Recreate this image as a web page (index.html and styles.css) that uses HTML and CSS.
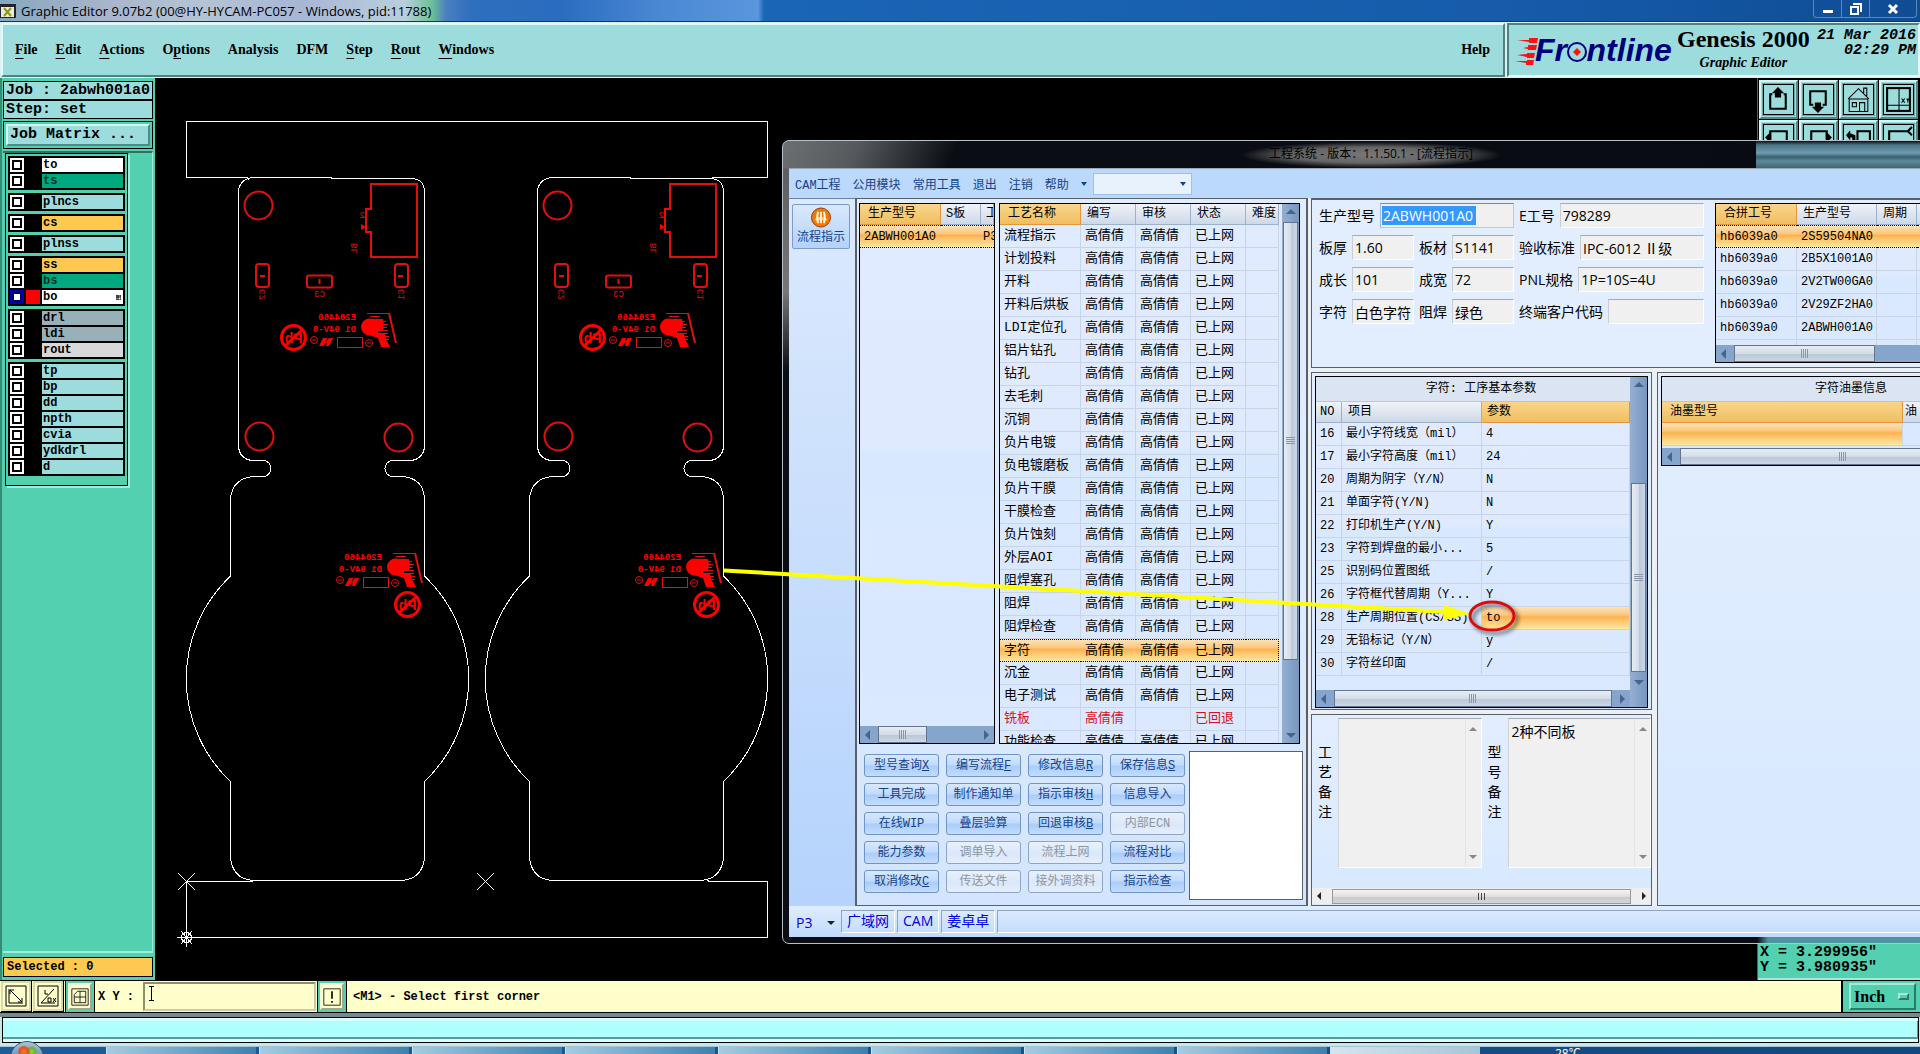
FILE: index.html
```html
<!DOCTYPE html>
<html lang="zh-CN">
<head>
    <meta charset="UTF-8">
    <meta name="viewport" content="width=device-width, initial-scale=1.0">
    <title>Graphic Editor 9.07b2</title>
    <link rel="stylesheet" href="styles.css">
</head>
<body>
    <div class="titlebar">
        <svg class="app-icon" width="16" height="14" viewBox="0 0 16 14"><rect width="16" height="14" fill="#223"/><rect x="1" y="3" width="13" height="10" fill="#e8ecd8"/><path d="M4 4l7 8M11 4l-7 8" stroke="#8c9a10" stroke-width="2"/></svg>
        <span class="title-text">Graphic Editor 9.07b2 (00@HY-HYCAM-PC057 - Windows, pid:11788)</span>
        <div class="win-controls">
            <button type="button" aria-label="Minimize"><svg width="12" height="12" viewBox="0 0 12 12"><rect x="1" y="7" width="10" height="3" fill="#fff"/></svg></button>
            <button type="button" aria-label="Restore"><svg width="12" height="12" viewBox="0 0 12 12"><path d="M3 1h8v8M1 4h7v7h-7z" fill="none" stroke="#fff" stroke-width="2"/></svg></button>
            <button type="button" class="wide" aria-label="Close"><svg width="12" height="12" viewBox="0 0 12 12"><path d="M2 2l8 8M10 2l-8 8" stroke="#fff" stroke-width="3"/></svg></button>
        </div>
    </div>

    <header class="header">
        <nav class="menubar">
            <a href="#"><u>F</u>ile</a>
            <a href="#"><u>E</u>dit</a>
            <a href="#"><u>A</u>ctions</a>
            <a href="#">O<u>p</u>tions</a>
            <a href="#">Analysis</a>
            <a href="#">DFM</a>
            <a href="#"><u>S</u>tep</a>
            <a href="#"><u>R</u>out</a>
            <a href="#"><u>W</u>indows</a>
            <a href="#" class="help">Help</a>
        </nav>
        <div class="brand">
            <svg class="logo" width="162" height="40" viewBox="0 0 162 40">
                <path d="M2 5l12 0 0-2 9 0-1 5-8 0 0-1zM8 13l5-1 0-2 9 0-1 5-8 0 0-1zM2 20l10-1 0-1 8 0-1 5-7 0 0-1zM0 26l12 0 0-1 7 0-1 5-7 0 0-2z" fill="#f11"/>
                <text x="20" y="26">Fr<tspan fill="none">o</tspan>ntline</text>
                <circle cx="62" cy="17" r="9" fill="#9cdcdc" stroke="#00007c" stroke-width="2"/>
                <path d="M62 13l4 4-4 4-4-4z" fill="#f11"/>
            </svg>
            <div class="product">
                <strong>Genesis 2000</strong>
                <em>Graphic Editor</em>
            </div>
            <div class="clock">21 Mar 2016<br>02:29 PM</div>
        </div>
    </header>

    <main class="main">
        <aside class="sidebar">
            <div class="job-info">
                <div>Job : 2abwh001a0</div>
                <div>Step: set</div>
            </div>
            <div class="matrix-box"><button type="button">Job Matrix ...</button></div>
            <div class="layer-area">
                <div class="layers">
                    <div class="group">
                        <label><input type="checkbox"><i></i><span class="white">to</span></label>
                        <label><input type="checkbox"><i></i><span class="green">ts</span></label>
                    </div>
                    <div class="group">
                        <label><input type="checkbox"><i></i><span>plncs</span></label>
                    </div>
                    <div class="group">
                        <label><input type="checkbox"><i></i><span class="amber">cs</span></label>
                    </div>
                    <div class="group">
                        <label><input type="checkbox"><i></i><span>plnss</span></label>
                    </div>
                    <div class="group">
                        <label><input type="checkbox"><i></i><span class="amber">ss</span></label>
                        <label><input type="checkbox"><i></i><span class="green">bs</span></label>
                        <label><input type="checkbox" class="active"><i class="red"></i><span class="white">bo<svg width="5" height="5" viewBox="0 0 5 5"><path d="M0 0h5v5h-5zM2 0v5M0 2h5" fill="none" stroke="#000"/></svg></span></label>
                    </div>
                    <div class="group">
                        <label><input type="checkbox"><i></i><span class="slate">drl</span></label>
                        <label><input type="checkbox"><i></i><span class="slate">ldi</span></label>
                        <label><input type="checkbox"><i></i><span class="grey">rout</span></label>
                    </div>
                    <div class="group">
                        <label><input type="checkbox"><i></i><span>tp</span></label>
                        <label><input type="checkbox"><i></i><span>bp</span></label>
                        <label><input type="checkbox"><i></i><span>dd</span></label>
                        <label><input type="checkbox"><i></i><span>npth</span></label>
                        <label><input type="checkbox"><i></i><span>cvia</span></label>
                        <label><input type="checkbox"><i></i><span>ydkdrl</span></label>
                        <label><input type="checkbox"><i></i><span>d</span></label>
                    </div>
                </div>
            </div>
            <div class="selected">Selected : 0</div>
        </aside>

        <div class="canvas">
            <svg width="625" height="903" viewBox="155 78 625 903">
                <defs>
                    <g id="mark">
                        <g transform="translate(356 0) scale(-1 1)">
                            <text x="0" y="320" class="silk bold">E204460</text>
                            <text x="0" y="332" class="silk bold">D1 94V-0</text>
                        </g>
                        <path d="M319 346l4-8h4l-1 4 3-4h4l-4 8h-3l1-4-4 4z" fill="#f00"/>
                        <rect x="337.500" y="337.500" width="25" height="10" class="thin"/>
                        <circle cx="314" cy="340" r="3.500" class="thin"/><path d="M312 340h4" class="thin"/>
                        <circle cx="369" cy="343" r="3.500" class="thin"/><path d="M367 343h4" class="thin"/>
                        <path d="M367 313.500h22" class="thin"/>
                        <path d="M389 313l7 30" class="thick"/>
                        <circle cx="369.500" cy="327" r="8.500" fill="#f00"/>
                        <path d="M369 319h14l1 5-1 6h-5v4h7l1 5 4 8h-9l-3-9-9-3z" fill="#f00"/>
                        <path d="M370 316.500h10M380 321.500h6M380 324.500h8M376 327.500h11M378 330.500h10M376 333.500h12M384 336.500h5M384 339.500h5" class="thin"/>
                    </g>
                    <g id="pb">
                        <circle r="12" class="ring"/>
                        <path d="M-8 8L9-8" class="ring"/>
                        <g transform="scale(-1 1)"><text x="-9" y="5" class="pb">Pb</text></g>
                    </g>
                    <g id="board">
                        <path class="outline" d="M252 177.500H331V178.500H411Q424.500 179 424.500 192V447Q423 459 411 460.500H393A8 8 0 0 0 393 476.500H402Q423 478 424.500 498V576A141.500 141.500 0 0 1 424.500 781.500V858Q422 879 402 880.500H253Q233 879 230.500 858V781.500A141.500 141.500 0 0 1 230.500 576V498Q233 478 254 476.500H263A8 8 0 0 0 263 460.500H252Q240 459 238.500 447V192Q239 180 252 177.500"/>
                        <g class="thick">
                            <circle cx="258.500" cy="205.500" r="14"/>
                            <circle cx="259.500" cy="436.500" r="14"/>
                            <circle cx="398.500" cy="437.500" r="14"/>
                            <path d="M371 184h46v73h-46v-25h-5v-23h5z"/>
                            <rect x="256" y="264" width="13" height="23" rx="3"/>
                            <rect x="307" y="275.500" width="25" height="12" rx="2"/>
                            <rect x="395" y="264" width="13" height="23" rx="3"/>
                            <path d="M260 276h5M319.500 279v5M398 276h5"/>
                        </g>
                        <path d="M361 224l5 3-5 3z" fill="#f00"/>
                        <text transform="translate(265 302) rotate(-90) scale(-1 1)" x="-13" class="silk dim">C2</text>
                        <text transform="translate(325 297) scale(-1 1)" class="silk dim">C3</text>
                        <text transform="translate(404 302) rotate(-90) scale(-1 1)" x="-13" class="silk dim">C1</text>
                        <text transform="translate(365 218) scale(-1 1)" class="silk dim">2</text>
                        <text transform="translate(357 252) rotate(-90) scale(-1 1)" x="-9" class="silk dim">BL</text>
                        <use href="#mark"/>
                        <use href="#pb" x="293.500" y="337.500"/>
                        <use href="#mark" x="26" y="240"/>
                        <use href="#pb" x="407.500" y="604.500"/>
                    </g>
                </defs>
                <path class="outline" d="M249 179.500L247 177.500H186.500V121.500H767.500V177.500H712M253 881.500H186.500V937.500H767.500V881.500H709L706 879"/>
                <use href="#board"/>
                <use href="#board" x="299"/>
                <path class="outline" d="M178 873l17 17M195 873l-17 17M477 873l17 17M494 873l-17 17M186.500 928v19M177 937.500h19M181 931l11 13M192 931l-11 13"/>
                <circle class="outline" cx="186.500" cy="937.500" r="5"/>
            </svg>
        </div>

        <aside class="palette">
            <div class="tools">
                <button type="button" aria-label="Load"><svg viewBox="0 0 28 28"><path d="M8 9h-2v14h15v-14h-2" class="s2"/><path d="M13.500 2l6 6h-3v4h-6v-4h-3z"/></svg></button>
                <button type="button" aria-label="Save"><svg viewBox="0 0 28 28"><path d="M9 19h-3v-13h15v13h-3" class="s2"/><path d="M13.500 27l6-6h-3v-4h-6v4h-3z"/></svg></button>
                <button type="button" aria-label="Home"><svg viewBox="0 0 28 28"><path d="M5 13.500h18v12h-18zM4 13.500l10-10 10 10M19 8v-5h3v8M8 17h4v4h-4zM15 25v-8h5v8" class="s1"/></svg></button>
                <button type="button" aria-label="View"><svg viewBox="0 0 28 28"><rect x="3" y="3" width="22" height="22" class="s2"/><path d="M14.500 3v22M3 19.500h22M17 13l3 4M20 13l-3 4M22 13l1 2 1-2M23 15v2" class="s1"/></svg></button>
                <button type="button" aria-label="Pan left"><svg viewBox="0 0 28 28"><path d="M6 14v-8h16v14h-16" class="s2"/><path d="M1 12l6-6v12z"/></svg></button>
                <button type="button" aria-label="Pan right"><svg viewBox="0 0 28 28"><path d="M22 14v-8h-15v14h15" class="s2"/><path d="M27 12l-6-6v12z"/></svg></button>
                <button type="button" aria-label="Previous view"><svg viewBox="0 0 28 28"><rect x="13" y="6" width="12" height="14" class="s2"/><path d="M2 10l4-5v3l5 2v5h-3v-3h-2v3z"/></svg></button>
                <button type="button" aria-label="Zoom area"><svg viewBox="0 0 28 28"><path d="M5 20v-14h18l4-4M23 6l4 4" class="s2"/></svg></button>
            </div>
            <div class="coords">X = 3.299956"<br>Y = 3.980935"</div>
        </aside>

        <section class="mes">
            <div class="mes-title">工程系统 - 版本：1.1.50.1 - [流程指示]</div>
            <nav class="mes-menu">
                <a href="#">CAM工程</a>
                <a href="#">公用模块</a>
                <a href="#">常用工具</a>
                <a href="#">退出</a>
                <a href="#">注销</a>
                <a href="#">帮助</a>
                <b class="caret"></b>
                <span class="combo"><select aria-label="搜索"><option></option></select><b class="caret"></b></span>
            </nav>
            <div class="mes-body">
                <aside class="mes-nav">
                    <button type="button">
                        <svg width="22" height="22" viewBox="0 0 22 22"><circle cx="11" cy="11" r="10" fill="#f07808" stroke="#993a08"/><path d="M4 14a8 8 0 0 1 14 0z" fill="#ffc860"/><path d="M8 17q-2-6 0-12M11 17v-12M14 17q2-6 0-12" fill="none" stroke="#fff3d8" stroke-width="2"/></svg>
                        流程指示
                    </button>
                </aside>

                <section class="flow">
                    <div class="flow-tables">
                        <div class="grid models">
                            <div class="rows">
                                <table>
                                    <colgroup><col class="c81"><col class="c40"><col></colgroup>
                                    <thead><tr><th class="hot">生产型号</th><th>S板</th><th>工</th></tr></thead>
                                    <tbody><tr class="sel"><td class="code">2ABWH001A0</td><td></td><td class="code line">P3</td></tr></tbody>
                                </table>
                            </div>
                            <div class="hscroll"><b class="left"></b><span class="thumb"></span><b class="right"></b></div>
                        </div>
                        <div class="grid process">
                            <div class="rows">
                                <table>
                                    <colgroup><col class="c81"><col class="c55"><col class="c55"><col class="c55"><col></colgroup>
                                    <thead><tr><th class="hot">工艺名称</th><th>编写</th><th>审核</th><th>状态</th><th>难度</th></tr></thead>
                                    <tbody>
                                        <tr><td>流程指示</td><td>高倩倩</td><td>高倩倩</td><td>已上网</td><td></td></tr>
                                        <tr><td>计划投料</td><td>高倩倩</td><td>高倩倩</td><td>已上网</td><td></td></tr>
                                        <tr><td>开料</td><td>高倩倩</td><td>高倩倩</td><td>已上网</td><td></td></tr>
                                        <tr><td>开料后烘板</td><td>高倩倩</td><td>高倩倩</td><td>已上网</td><td></td></tr>
                                        <tr><td>LDI定位孔</td><td>高倩倩</td><td>高倩倩</td><td>已上网</td><td></td></tr>
                                        <tr><td>铝片钻孔</td><td>高倩倩</td><td>高倩倩</td><td>已上网</td><td></td></tr>
                                        <tr><td>钻孔</td><td>高倩倩</td><td>高倩倩</td><td>已上网</td><td></td></tr>
                                        <tr><td>去毛刺</td><td>高倩倩</td><td>高倩倩</td><td>已上网</td><td></td></tr>
                                        <tr><td>沉铜</td><td>高倩倩</td><td>高倩倩</td><td>已上网</td><td></td></tr>
                                        <tr><td>负片电镀</td><td>高倩倩</td><td>高倩倩</td><td>已上网</td><td></td></tr>
                                        <tr><td>负电镀磨板</td><td>高倩倩</td><td>高倩倩</td><td>已上网</td><td></td></tr>
                                        <tr><td>负片干膜</td><td>高倩倩</td><td>高倩倩</td><td>已上网</td><td></td></tr>
                                        <tr><td>干膜检查</td><td>高倩倩</td><td>高倩倩</td><td>已上网</td><td></td></tr>
                                        <tr><td>负片蚀刻</td><td>高倩倩</td><td>高倩倩</td><td>已上网</td><td></td></tr>
                                        <tr><td>外层AOI</td><td>高倩倩</td><td>高倩倩</td><td>已上网</td><td></td></tr>
                                        <tr><td>阻焊塞孔</td><td>高倩倩</td><td>高倩倩</td><td>已上网</td><td></td></tr>
                                        <tr><td>阻焊</td><td>高倩倩</td><td>高倩倩</td><td>已上网</td><td></td></tr>
                                        <tr><td>阻焊检查</td><td>高倩倩</td><td>高倩倩</td><td>已上网</td><td></td></tr>
                                        <tr class="sel"><td>字符</td><td>高倩倩</td><td>高倩倩</td><td>已上网</td><td></td></tr>
                                        <tr><td>沉金</td><td>高倩倩</td><td>高倩倩</td><td>已上网</td><td></td></tr>
                                        <tr><td>电子测试</td><td>高倩倩</td><td>高倩倩</td><td>已上网</td><td></td></tr>
                                        <tr class="back"><td>铣板</td><td>高倩倩</td><td></td><td>已回退</td><td></td></tr>
                                        <tr><td>功能检查</td><td>高倩倩</td><td>高倩倩</td><td>已上网</td><td></td></tr>
                                    </tbody>
                                </table>
                            </div>
                            <div class="vscroll"><b class="up"></b><span class="thumb"></span><b class="down"></b></div>
                        </div>
                    </div>
                    <div class="flow-actions">
                        <div class="buttons">
                            <button type="button">型号查询<u>X</u></button>
                            <button type="button">编写流程<u>F</u></button>
                            <button type="button">修改信息<u>R</u></button>
                            <button type="button">保存信息<u>S</u></button>
                            <button type="button">工具完成</button>
                            <button type="button">制作通知单</button>
                            <button type="button">指示审核<u>H</u></button>
                            <button type="button">信息导入</button>
                            <button type="button">在线WIP</button>
                            <button type="button">叠层验算</button>
                            <button type="button">回退审核<u>B</u></button>
                            <button type="button" disabled>内部ECN</button>
                            <button type="button">能力参数</button>
                            <button type="button" disabled>调单导入</button>
                            <button type="button" disabled>流程上网</button>
                            <button type="button">流程对比</button>
                            <button type="button">取消修改<u>C</u></button>
                            <button type="button" disabled>传送文件</button>
                            <button type="button" disabled>接外调资料</button>
                            <button type="button">指示检查</button>
                        </div>
                        <div class="preview"></div>
                    </div>
                </section>

                <section class="detail">
                    <div class="panel summary">
                        <form class="info">
                            <label class="span2">生产型号<input type="text" class="picked" value="2ABWH001A0"></label>
                            <label>E工号<input type="text" value="798289"></label>
                            <label>板厚<input type="text" value="1.60"></label>
                            <label>板材<input type="text" value="S1141"></label>
                            <label>验收标准<input type="text" value="IPC-6012 Ⅱ级"></label>
                            <label>成长<input type="text" value="101"></label>
                            <label>成宽<input type="text" value="72"></label>
                            <label>PNL规格<input type="text" value="1P=10S=4U"></label>
                            <label>字符<input type="text" value="白色字符"></label>
                            <label>阻焊<input type="text" value="绿色"></label>
                            <label>终端客户代码<input type="text" value=""></label>
                        </form>
                        <div class="grid merged">
                            <div class="rows">
                                <table>
                                    <colgroup><col class="c81"><col class="c80"><col class="c40"><col></colgroup>
                                    <thead><tr><th class="hot">合拼工号</th><th>生产型号</th><th>周期</th><th></th></tr></thead>
                                    <tbody>
                                        <tr class="sel"><td class="code">hb6039a0</td><td class="code">2S59504NA0</td><td></td><td></td></tr>
                                        <tr><td class="code">hb6039a0</td><td class="code">2B5X1001A0</td><td></td><td></td></tr>
                                        <tr><td class="code">hb6039a0</td><td class="code">2V2TW00GA0</td><td></td><td></td></tr>
                                        <tr><td class="code">hb6039a0</td><td class="code">2V29ZF2HA0</td><td></td><td></td></tr>
                                        <tr><td class="code">hb6039a0</td><td class="code">2ABWH001A0</td><td></td><td></td></tr>
                                        <tr><td></td><td></td><td></td><td></td></tr>
                                    </tbody>
                                </table>
                            </div>
                            <div class="hscroll"><b class="left"></b><span class="thumb"></span></div>
                        </div>
                    </div>
                    <div class="lower">
                        <div class="lower-left">
                            <div class="panel params">
                                <div class="grid">
                                    <div class="rows">
                                        <table>
                                            <caption>字符: 工序基本参数</caption>
                                            <colgroup><col class="c26"><col class="c140"><col></colgroup>
                                            <thead><tr><th class="num">NO</th><th>项目</th><th class="hot">参数</th></tr></thead>
                                            <tbody>
                                                <tr><td class="num">16</td><td>最小字符线宽（mil）</td><td class="code">4</td></tr>
                                                <tr><td class="num">17</td><td>最小字符高度（mil）</td><td class="code">24</td></tr>
                                                <tr><td class="num">20</td><td>周期为阴字（Y/N）</td><td class="code">N</td></tr>
                                                <tr><td class="num">21</td><td>单面字符(Y/N)</td><td class="code">N</td></tr>
                                                <tr><td class="num">22</td><td>打印机生产(Y/N)</td><td class="code">Y</td></tr>
                                                <tr><td class="num">23</td><td>字符到焊盘的最小...</td><td class="code">5</td></tr>
                                                <tr><td class="num">25</td><td>识别码位置图纸</td><td class="code">/</td></tr>
                                                <tr><td class="num">26</td><td>字符框代替周期（Y...</td><td class="code">Y</td></tr>
                                                <tr><td class="num">28</td><td>生产周期位置(CS/SS)</td><td class="code lit">to</td></tr>
                                                <tr><td class="num">29</td><td>无铅标记（Y/N）</td><td class="code">y</td></tr>
                                                <tr><td class="num">30</td><td>字符丝印面</td><td class="code">/</td></tr>
                                            </tbody>
                                        </table>
                                    </div>
                                    <div class="vscroll"><b class="up"></b><span class="thumb"></span><b class="down"></b></div>
                                    <div class="hscroll"><b class="left"></b><span class="thumb"></span><b class="right"></b></div>
                                </div>
                            </div>
                            <div class="panel notes">
                                <div class="notes-row">
                                    <label for="noteCraft">工艺备注</label>
                                    <div class="note"><textarea id="noteCraft"></textarea><span class="mini"><b class="up"></b><b class="down"></b></span></div>
                                    <label for="noteModel">型号备注</label>
                                    <div class="note"><textarea id="noteModel">2种不同板</textarea><span class="mini"><b class="up"></b><b class="down"></b></span></div>
                                </div>
                                <div class="hscroll plain"><b class="left"></b><span class="thumb"></span><b class="right"></b></div>
                            </div>
                        </div>
                        <div class="panel ink">
                            <div class="grid">
                                <div class="rows">
                                    <table>
                                        <caption>字符油墨信息</caption>
                                        <colgroup><col class="c241"><col></colgroup>
                                        <thead><tr><th class="hot">油墨型号</th><th class="line">油</th></tr></thead>
                                        <tbody><tr><td class="lit"></td><td></td></tr></tbody>
                                    </table>
                                </div>
                                <div class="hscroll"><b class="left"></b><span class="thumb"></span><b class="right"></b></div>
                            </div>
                        </div>
                    </div>
                </section>
            </div>
            <footer class="mes-status">
                <span class="site">P3 <b class="caret"></b></span>
                <span class="cell">广域网</span>
                <span class="cell">CAM</span>
                <span class="cell">姜卓卓</span>
                <span class="cell fill"></span>
            </footer>
        </section>

        <!-- callout from the silk mark to the "to" parameter -->
        <svg class="callout" width="840" height="110" viewBox="700 540 840 110">
            <defs><filter id="soft" x="-20%" y="-30%" width="150%" height="170%"><feDropShadow dx="3" dy="3" stdDeviation="2" flood-opacity="0.6"/></filter></defs>
            <path d="M724 570.500L1446 612" stroke="#ff0" stroke-width="4"/>
            <path d="M1444 605l27 9-28 6z" fill="#ff0"/>
            <ellipse cx="1492" cy="616" rx="22" ry="14" fill="none" stroke="#d91111" stroke-width="3" filter="url(#soft)"/>
        </svg>
    </main>

    <div class="command">
        <button type="button" aria-label="Snap"><svg viewBox="0 0 22 22"><path d="M1 1h20v20h-20zM4 4v14h14M5 5l12 12M5 9v-4h4M13 17h4v-4" class="s1"/></svg></button>
        <button type="button" aria-label="Angle"><svg viewBox="0 0 22 22"><path d="M1 1h20v20h-20zM4 18L17 4M4 18h14M8 5v4h3M11 13h3v4h-3zM16 13l3 4M19 13l-3 4" class="s1"/></svg></button>
        <span class="slot"><button type="button" aria-label="Grid"><svg viewBox="0 0 22 22"><path d="M4 8l4-4h10v14h-14zM11 4v14M4 11h14M1 1h20v20h-20z" class="s1"/></svg></button></span>
        <label for="xy">X Y :</label>
        <input type="text" id="xy">
        <span class="slot"><button type="button" aria-label="Alert"><svg viewBox="0 0 22 22"><path d="M1 1h20v20h-20z" class="s1"/><path d="M11 4v9M11 16v2" class="s2"/></svg></button></span>
        <p>&lt;M1&gt; - Select first corner</p>
        <div class="unit">
            <div class="unit-box"><select aria-label="Unit"><option>Inch</option></select><i></i></div>
        </div>
    </div>
    <div class="statusbar"><div></div></div>
    <footer class="taskbar">
        <span class="orb"></span>
        <span class="task"></span><span class="task"></span><span class="task"></span><span class="task"></span><span class="task"></span><span class="task"></span><span class="task"></span><span class="task"></span><span class="task bright"></span>
        <span class="temp">28℃</span>
    </footer>
</body>
</html>
```
FILE: styles.css
```css
* {
    box-sizing: border-box;
}

body {
    margin: 0;
    height: 100vh;
    display: flex;
    flex-direction: column;
    overflow: hidden;
    background: #000;
    color: #000;
    font-family: "Liberation Mono", "Noto Sans CJK SC", monospace;
    font-size: 12px;
}

button, input, select, textarea {
    font: inherit;
    color: inherit;
    margin: 0;
    padding: 0;
    border: 0;
    border-radius: 0;
    outline: 0;
}

a {
    color: inherit;
    text-decoration: none;
}

select {
    appearance: none;
}

.s1 {
    fill: none;
    stroke: #000;
}

.s2 {
    fill: none;
    stroke: #000;
    stroke-width: 2;
}

/* title bar */
.titlebar {
    height: 22px;
    flex: none;
    display: flex;
    align-items: center;
    gap: 5px;
    border-bottom: 1px solid #16365c;
    background: linear-gradient(90deg, #86a8be 0, #a9b5cc 110px, #b4c4d4 200px, #a8b6d6 300px, #b9cfdc 405px, #6cbf98 432px, #4a80c0 446px, #2f6fbe 470px, #2a6cbf 560px, #4b88d4 660px, #5a96de 758px, #1b65b6 764px, #165cab 1500px, #0f4c94);
    font-family: "Open Sans", sans-serif;
    font-size: 13px;
}

.win-controls {
    margin-left: auto;
    margin-right: 3px;
    align-self: flex-start;
    display: flex;
    height: 18px;
    border: 1px solid #5c86b8;
    border-top: 0;
    border-radius: 0 0 4px 4px;
}

.win-controls button {
    width: 28px;
    display: grid;
    place-items: center;
    background: none;
    border-right: 1px solid #5c86b8;
}

.win-controls .wide {
    width: 46px;
    border-right: 0;
}

/* menu + brand */
.header {
    height: 56px;
    flex: none;
    display: flex;
    gap: 2px;
    padding-left: 1px;
    background: #d5f3f3;
    font-family: "Liberation Serif", serif;
    font-weight: bold;
}

.menubar, .brand {
    background: #9cdcdc;
    border: 2px solid;
    border-color: #e2f8f8 #527f80 #527f80 #e2f8f8;
    margin: 1px 0;
}

.menubar {
    flex: 1;
    display: flex;
    align-items: center;
    gap: 18px;
    padding: 0 13px 0 12px;
    font-size: 14px;
}

.menubar u {
    text-underline-offset: 4px;
}

.menubar .help {
    margin-left: auto;
}

.brand {
    width: 413px;
    display: flex;
    border-color: #527f80 #e2f8f8 #e2f8f8 #527f80;
    padding: 0 0 0 6px;
}

.logo {
    flex: none;
    margin-top: 10px;
    overflow: visible;
}

.logo text {
    font: italic bold 32px "Liberation Sans", sans-serif;
    fill: #00007c;
}

.product {
    display: flex;
    flex-direction: column;
    align-items: center;
    line-height: 28px;
    white-space: nowrap;
}

.product strong {
    font-size: 24px;
}

.product em {
    font-size: 14px;
    line-height: 20px;
}

.clock {
    flex: 1;
    text-align: right;
    font: italic bold 15px/15px "Liberation Mono", monospace;
    padding: 3px 2px 0 0;
    white-space: nowrap;
}

/* workspace */
.main {
    flex: 1;
    min-height: 0;
    display: flex;
    position: relative;
    overflow: hidden;
}

.sidebar {
    width: 155px;
    display: flex;
    flex-direction: column;
    background: #52d0b0;
    border-left: 2px solid #3a8a78;
    padding: 3px 2px 3px 1px;
    font-weight: bold;
    margin-bottom: 1px;
}

.job-info div {
    height: 19px;
    line-height: 18px;
    border: 1px solid #000;
    background: #9cdcdc;
    padding-left: 2px;
    font-size: 15px;
    white-space: nowrap;
    overflow: hidden;
}

.matrix-box {
    height: 28px;
    margin-top: 2px;
    border: 1px solid #000;
    padding: 2px;
}

.matrix-box button {
    width: 100%;
    height: 100%;
    background: #9cdcdc;
    border: 2px solid;
    border-color: #d8f5f5 #4f8a8a #4f8a8a #d8f5f5;
    font-size: 15px;
    font-weight: bold;
    line-height: 18px;
    text-align: left;
    padding-left: 2px;
}

.layer-area {
    flex: 1;
    margin-top: 2px;
    margin-bottom: 4px;
    border-top: 2px solid #32705f;
    border-bottom: 2px solid #a5ead9;
    border-right: 1px solid #a5ead9;
}

.layers {
    width: 123px;
    margin-left: 2px;
    padding: 2px 2px 9px;
    border: 1px solid #000;
    box-shadow: 2px 2px 0 #a5ead9;
    display: flex;
    flex-direction: column;
    gap: 3px;
}

.group {
    background: #000;
    padding: 2px;
    display: flex;
    flex-direction: column;
    gap: 2px;
}

.group label {
    display: flex;
    gap: 2px;
    height: 14px;
}

.group input {
    appearance: none;
    width: 14px;
    height: 14px;
    background: #fff;
    border: 2px solid #fff;
    box-shadow: inset 0 0 0 2px #000;
}

.group .active {
    border-color: #0000b8;
    box-shadow: inset 0 0 0 2px #000060;
}

.group i {
    width: 14px;
}

.group span {
    flex: 1;
    display: flex;
    align-items: center;
    justify-content: space-between;
    padding: 0 2px 0 1px;
    background: #9cdcdc;
}

.group .red { background: #f00; }
.group .white { background: #fff; }
.group .green { background: #00a880; color: #032; }
.group .amber { background: #ffc850; }
.group .slate { background: #98b0b8; }
.group .grey { background: #d8d8d8; }

.selected {
    height: 20px;
    line-height: 19px;
    padding-left: 3px;
    background: #ffc850;
    border: 1px solid #000;
}

.canvas {
    flex: 1;
    min-width: 0;
    overflow: hidden;
}

.canvas svg {
    display: block;
}

.outline {
    fill: none;
    stroke: #fff;
    shape-rendering: crispEdges;
}

.thin, .thick, .ring {
    fill: none;
    stroke: #e01010;
}

.thick {
    stroke-width: 2;
}

.ring {
    stroke: #f00;
    stroke-width: 3;
}

.silk {
    font: 9px "Liberation Mono", monospace;
    fill: #f00;
}

.silk.bold {
    font-weight: bold;
}

.silk.dim {
    fill: #e01010;
}

.pb {
    font: bold 14px "Liberation Sans", sans-serif;
    fill: #f00;
}

.palette {
    width: 163px;
    display: flex;
    flex-direction: column;
    justify-content: space-between;
    background: #52d0b0;
    border-left: 1px solid #32705f;
    margin-bottom: 1px;
}

.tools {
    display: grid;
    grid-template-columns: repeat(4, 39px);
    gap: 1px;
    padding: 2px 1px;
    background: #000;
}

.tools button {
    height: 39px;
    padding: 2px;
    background: #9cdcdc;
    border: 2px solid;
    border-color: #d8f5f5 #4f8a8a #4f8a8a #d8f5f5;
}

.tools svg {
    display: block;
    border: 1px solid #000;
    outline: 1px solid #6fa8a8;
    width: 31px;
    height: 31px;
}

.coords {
    font-size: 15px;
    font-weight: bold;
    line-height: 15px;
    height: 39px;
    padding-left: 2px;
    padding-top: 4px;
    border-bottom: 2px solid #a5ead9;
}

/* order management window */
.mes {
    position: absolute;
    left: 782px;
    right: -40px;
    top: 62px;
    bottom: 37px;
    display: flex;
    flex-direction: column;
    border: 1px solid #b8c0c8;
    border-radius: 7px;
    padding: 0 6px 6px;
    background:
        linear-gradient(180deg, #0b0e13, #4b7486 4px, #6c9db0 12px, #3c5f70 16px, #5c8a9c 20px, #3e6270) right top / 203px 28px no-repeat,
        linear-gradient(115deg, #6d7073 0, #55585c 70px, #0a0d13 160px, #080c12 100%) left top / 100% 28px no-repeat,
        linear-gradient(90deg, #090c12 0, #090c12 974px, #4d94a0 985px) left bottom / 100% 6px no-repeat,
        linear-gradient(180deg, #55585c 0, #777 150px, #0a0d13 230px);
}

.mes-title {
    height: 28px;
    flex: none;
    line-height: 25px;
    text-align: center;
    font-family: "Open Sans", "Noto Sans CJK SC", sans-serif;
    color: #000;
    background: radial-gradient(closest-side, #777 0, #666 60%, transparent) center / 260px 26px no-repeat;
    border-bottom: 1px solid #9aa7b4;
}

.mes-menu {
    height: 29px;
    flex: none;
    display: flex;
    align-items: center;
    gap: 12px;
    padding-left: 6px;
    background: #bbd8fd;
    color: #15428b;
}

.caret {
    border: 3px solid transparent;
    border-top: 4px solid #15428b;
    border-bottom: 0;
}

.combo {
    width: 99px;
    height: 22px;
    display: flex;
    align-items: center;
    border: 1px solid #9fc0ea;
    background: #e8f2fd;
    margin-left: -6px;
    padding-right: 5px;
}

.combo select {
    flex: 1;
    background: none;
}

.mes-body {
    flex: 1;
    min-height: 0;
    display: flex;
    background: #eceff4;
}

.mes-nav {
    width: 66px;
    padding: 5px 4px 0 3px;
    background: linear-gradient(#dbe9fd, #b5d3fc);
    border-top: 1px solid #6d83a8;
}

.mes-nav button {
    width: 58px;
    height: 45px;
    display: flex;
    flex-direction: column;
    align-items: center;
    line-height: 20px;
    padding-top: 2px;
    border: 1px solid #7f9cc8;
    border-radius: 2px;
    background: linear-gradient(#d9e8fc, #b4d2fb);
    color: #15428b;
    white-space: nowrap;
}

.flow {
    width: 453px;
    margin-right: 3px;
    display: flex;
    flex-direction: column;
    border: 1px solid #5a6068;
    border-width: 1px 2px;
    padding: 4px 5px 0 2px;
    background: linear-gradient(#e0edff, #dcebfe 60%, #d3e4fe);
}

.flow-tables {
    flex: 1;
    min-height: 0;
    display: flex;
    gap: 4px;
}

/* data grids */
.grid {
    display: grid;
    grid-template-columns: minmax(0, 1fr) auto;
    grid-template-rows: minmax(0, 1fr) auto;
    border: 1px solid #000;
    overflow: hidden;
    background: linear-gradient(#dfebff, #dfeaff 45%, #d8e9fe 46%, #dbe8ff);
}

.models { width: 136px; }
.process { width: 301px; }

.rows {
    overflow: hidden;
}

.process .rows {
    padding-right: 3px;
}

.grid table {
    width: 100%;
    table-layout: fixed;
    border-spacing: 0;
}

.grid caption {
    height: 25px;
    line-height: 24px;
    padding-left: 16px;
    background: #dbe4f2;
    border-bottom: 1px solid #b8c4d8;
}

.c26 { width: 26px; }
.c40 { width: 40px; }
.c55 { width: 55px; }
.c80 { width: 80px; }
.c81 { width: 81px; }
.c140 { width: 140px; }
.c241 { width: 241px; }

.grid th {
    height: 21px;
    padding: 0 0 0 6px;
    font-weight: normal;
    text-align: left;
    line-height: 18px;
    white-space: nowrap;
    overflow: hidden;
    background: linear-gradient(#f0f3f9, #cdd8e8);
    border-right: 1px solid #9db0cc;
    border-bottom: 1px solid #9db0cc;
}

.models th {
    padding-left: 5px;
}

.grid th.hot {
    padding-left: 8px;
    background: linear-gradient(#fad68c, #f0be60);
    border-color: #e8943a;
}

.grid td {
    height: 23px;
    padding: 0 0 0 4px;
    font-size: 13px;
    line-height: 18px;
    white-space: nowrap;
    overflow: hidden;
    border-right: 1px solid #c9d4e6;
    border-bottom: 1px solid #c9d4e6;
}

.grid .code,
.grid .num {
    font-size: 12px;
}

.grid .num {
    padding-left: 4px;
}

.grid .line {
    padding-left: 2px;
    border-right: 0;
}

.params .grid th.hot {
    padding-left: 5px;
}

.params td:nth-child(2) {
    font-size: 12px;
}

.grid .sel td {
    border-right: 0;
    border-top: 1px dotted #000;
    border-bottom: 1px dotted #000;
}

.grid .sel td, .grid td.lit {
    background: linear-gradient(#fde3b4, #fcc880 35%, #fdb252 45%, #fdc36a 60%, #fee89c);
}

.process .sel td:last-child {
    border-right: 1px dotted #000;
}

.back {
    color: #d8101c;
}

/* scroll bars */
.hscroll, .vscroll {
    display: flex;
    align-items: center;
    justify-content: space-between;
    background: #86a5cc;
}

.hscroll {
    height: 17px;
    grid-column: 1;
    grid-row: 2;
}

.vscroll {
    width: 17px;
    flex-direction: column;
    grid-column: 2;
    grid-row: 1 / 3;
}

.grid > .vscroll {
    background: linear-gradient(90deg, #94afd2, #7797c0);
}

.hscroll b, .vscroll b, .mini b {
    border: 5px solid transparent;
    flex: none;
    margin: 5px;
}

b.left { border-right-color: #46638c; border-left-width: 0; }
b.right { border-left-color: #46638c; border-right-width: 0; }
b.up { border-bottom-color: #46638c; border-top-width: 0; }
b.down { border-top-color: #46638c; border-bottom-width: 0; }

/* one-way arrows: drop the side opposite the point */
.hscroll .left { border-left-width: 0; border-right-color: #46638c; }
.hscroll .right { border-right-width: 0; border-left-color: #46638c; }
.vscroll .up { border-top-width: 0; border-bottom-color: #46638c; }
.vscroll .down { border-bottom-width: 0; border-top-color: #46638c; }

.thumb {
    border: 1px solid #62748e;
    background:
        repeating-linear-gradient(90deg, #8c98a8 0, #8c98a8 1px, transparent 1px, transparent 2px) center / 8px 9px no-repeat,
        linear-gradient(#e8edf4, #d3dce8 50%, #bac8d8 55%, #ccd8e4);
}

.hscroll .thumb {
    height: 17px;
    flex: 1;
    margin: 0 3px;
}

.vscroll .thumb {
    width: 15px;
    flex: 1;
    margin: 3px 0;
    background:
        repeating-linear-gradient(#8c98a8 0, #8c98a8 1px, transparent 1px, transparent 2px) center / 9px 8px no-repeat,
        linear-gradient(90deg, #e8edf4, #d3dce8 50%, #bac8d8 55%, #ccd8e4);
}

.models .hscroll .thumb {
    flex: none;
    width: 49px;
    margin-right: auto;
}

.process .vscroll .thumb {
    margin-bottom: 68px;
}

.merged .hscroll .thumb {
    flex: none;
    width: 141px;
    margin-right: auto;
}

.params .vscroll .thumb {
    margin-top: 91px;
}

.params .vscroll {
    padding-bottom: 17px;
}

/* action buttons */
.flow-actions {
    height: 161px;
    flex: none;
    display: flex;
    justify-content: space-between;
    padding: 7px 0 4px 5px;
    margin-right: -2px;
}

.buttons {
    display: grid;
    grid-template-columns: repeat(4, 75px);
    grid-auto-rows: 23px;
    gap: 6px 7px;
    padding-top: 3px;
}

.buttons button {
    border: 1px solid #6f94c8;
    border-radius: 3px;
    background: linear-gradient(#d8e8fd, #c3dbfc 45%, #aacdfb 55%, #c4dcfd);
    color: #15428b;
    line-height: 18px;
    white-space: nowrap;
}

.buttons button:disabled {
    background: linear-gradient(#e8f1fc, #dbe8fa 55%, #e4eefc);
    border-color: #8fa4c4;
    color: #8d959f;
}

.preview {
    width: 114px;
    height: 149px;
    background: #fff;
    border: 1px solid #5a6068;
}

/* right side */
.detail {
    flex: 1;
    min-width: 0;
    display: flex;
    flex-direction: column;
    gap: 4px;
}

.panel {
    border: 1px solid #5a6068;
    padding: 3px;
    background: linear-gradient(#e2eeff, #d8e9fe);
}

.summary {
    height: 170px;
    flex: none;
    display: flex;
    gap: 11px;
    padding: 3px 0 5px 7px;
    background: #e2edfd;
    border-top-width: 2px;
}

.info {
    display: grid;
    grid-template-columns: 95px 95px 185px;
    grid-auto-rows: 25px;
    gap: 7px 5px;
    font-family: "Open Sans", "Noto Sans CJK SC", sans-serif;
    font-size: 14px;
}

.info label {
    display: flex;
    align-items: center;
    gap: 5px;
    white-space: nowrap;
    line-height: 20px;
}

.info .span2 {
    grid-column: span 2;
}

.info input {
    flex: 1;
    min-width: 0;
    height: 25px;
    padding-left: 2px;
    background: #f0f0f0;
    border: 1px solid;
    border-color: #a5aab2 #fff #fff #c8ccd4;
}

.info .picked {
    color: #fff;
    background: linear-gradient(#3399ff, #3399ff) 1px 2px / 94px 19px no-repeat, #f0f0f0;
    border-color: #5d8fc8 #b8cbe4 #b8cbe4 #9bb8dc;
}

.merged {
    flex: 1;
    height: 160px;
}

.lower {
    flex: 1;
    min-height: 0;
    display: flex;
    gap: 5px;
}

.lower-left {
    width: 341px;
    flex: none;
    display: flex;
    flex-direction: column;
    gap: 4px;
}

.params {
    flex: none;
    height: 338px;
}

.params .grid {
    height: 332px;
}

.notes {
    flex: 1;
    display: flex;
    flex-direction: column;
    justify-content: space-between;
    padding: 3px 0 1px;
    font-family: "Open Sans", "Noto Sans CJK SC", sans-serif;
    font-size: 14px;
}

.notes-row {
    display: flex;
    height: 150px;
}

.notes-row label {
    flex: none;
    width: 26px;
    padding: 24px 5px 0 6px;
    line-height: 20px;
    word-break: break-all;
}

.note {
    flex: 1;
    min-width: 0;
    display: flex;
    background: #f0f0f0;
    border: 1px solid;
    border-color: #a5aab2 #fff #fff #d0d4da;
}

.note textarea {
    flex: 1;
    min-width: 0;
    resize: none;
    overflow: hidden;
    background: none;
    padding: 3px;
    line-height: 20px;
}

.mini {
    width: 16px;
    display: flex;
    flex-direction: column;
    justify-content: space-between;
    align-items: center;
    border-left: 1px solid #e4e4e4;
}

.mini b {
    border-width: 4px;
    margin: 8px 0;
}

.mini .up { border-top-width: 0; border-bottom-color: #888; }
.mini .down { border-bottom-width: 0; border-top-color: #888; }

.hscroll.plain {
    height: 16px;
    background: #eee;
}

.plain b {
    border-width: 4px;
}

.plain .left { border-left-width: 0; border-right-color: #222; }
.plain .right { border-right-width: 0; border-left-color: #222; }

.plain .thumb {
    height: 15px;
    margin: 0 6px;
    border-color: #999;
    background:
        repeating-linear-gradient(90deg, #444 0, #444 1px, transparent 1px, transparent 3px) center / 8px 7px no-repeat,
        linear-gradient(#f4f4f4, #e0e0e0 50%, #cbcbcb 55%, #d6d6d6);
}

.ink {
    flex: 1;
    min-width: 0;
    overflow: hidden;
}

.ink .grid {
    width: 364px;
    height: 90px;
}

.mes-status {
    height: 31px;
    flex: none;
    display: flex;
    gap: 2px;
    padding: 4px 0;
    background: linear-gradient(#e0edff, #c0dafc);
    color: #0000dc;
    font: 14px/20px "Open Sans", "Noto Sans CJK SC", sans-serif;
}

.site {
    width: 50px;
    padding: 2px 4px 0 7px;
    display: flex;
    align-items: center;
    justify-content: space-between;
}

.site .caret {
    border-width: 4px;
    border-bottom: 0;
    border-top-color: #222;
}

.cell {
    padding: 0 5px;
    border: 1px solid;
    border-color: #8ea4c4 #fff #fff #8ea4c4;
}

.cell.fill {
    flex: 1;
}

.callout {
    position: absolute;
    left: 700px;
    top: 462px;
    pointer-events: none;
}

/* command line */
.command {
    height: 32px;
    flex: none;
    display: flex;
    align-items: stretch;
    gap: 1px;
    padding-left: 1px;
    border-bottom: 1px solid #000;
    background: #ffffcc;
    font-weight: bold;
}

.command button {
    width: 31px;
    padding: 3px;
    background: #ffffcc;
    border: 1px solid #000;
    border-width: 0 1px 1px 0;
    display: grid;
    place-items: center;
}

.command svg {
    width: 22px;
    height: 22px;
    outline: 2px solid #d9d9ac;
    outline-offset: 2px;
}

.slot {
    width: 30px;
    padding: 2px;
    background: #52d0b0;
    border: 1px solid #000;
    border-width: 0 1px;
}

.command .slot button {
    width: 24px;
    height: 27px;
    border: 2px solid;
    border-color: #f6f6d8 #a8a880 #a8a880 #f6f6d8;
    padding: 0;
}

.slot svg {
    width: 18px;
    height: 18px;
    outline: 0;
}

.command label {
    width: 46px;
    padding-left: 2px;
    line-height: 33px;
    white-space: nowrap;
}

/* the I-beam is drawn in the field */
.command input {
    width: 173px;
    margin: 1px 0;
    padding-left: 4px;
    background:
        linear-gradient(#000, #000) 6px 2px / 1px 14px no-repeat,
        linear-gradient(#000, #000) 4px 2px / 5px 1px no-repeat,
        linear-gradient(#000, #000) 4px 16px / 5px 1px no-repeat,
        #ffffcc;
    border: 2px solid;
    border-color: #8f8f70 #cccca0 #cccca0 #8f8f70;
}

.command p {
    flex: 1;
    margin: 0;
    padding-left: 5px;
    line-height: 33px;
}

.unit {
    width: 79px;
    padding: 2px 4px 2px 6px;
    background: #52d0b0;
    border-left: 2px solid #000;
}

.unit-box {
    height: 27px;
    display: flex;
    align-items: center;
    justify-content: space-between;
    padding: 0 5px 0 3px;
    border: 2px solid;
    border-color: #a5ead9 #2a7a66 #2a7a66 #a5ead9;
    font: bold 16px "Liberation Serif", serif;
}

.unit select {
    background: none;
}

.unit i {
    width: 11px;
    height: 7px;
    border: 2px solid;
    border-color: #a5ead9 #2a7a66 #2a7a66 #a5ead9;
}

.statusbar {
    height: 33px;
    flex: none;
    padding: 4px 1px 3px 2px;
    background: linear-gradient(#748a8e 4px, #c8e8e8 4px);
}

.statusbar div {
    height: 26px;
    background: #b0ffff;
    border: 1px solid #000;
    box-shadow: inset 0 3px 0 #d8ffff, inset 0 -3px 0 #d8ffff, inset -1px -5px 0 #5a9a9c;
}

.taskbar {
    height: 8px;
    flex: none;
    position: relative;
    display: flex;
    gap: 3px;
    padding-left: 106px;
    background: linear-gradient(90deg, #1d5c96, #14477e);
    border-top: 1px solid #9fc4dc;
}

.orb {
    position: absolute;
    left: 10px;
    top: -6px;
    width: 34px;
    height: 34px;
    border-radius: 50%;
    background: radial-gradient(circle at 40% 30%, #f08030 0, #e05020 15%, transparent 22%), radial-gradient(circle at 65% 30%, #9ed040 0, #70b030 12%, transparent 20%), linear-gradient(#a8c4dc, #2a5a90);
    border: 1px solid #456;
}

.task {
    width: 150px;
    background: linear-gradient(90deg, #a8cbe0, #3f80ae);
    border-left: 1px solid #cfe4f2;
}

.task.bright {
    background: linear-gradient(90deg, #d8e4ec, #a8c4d8);
}

.temp {
    margin-left: 72px;
    color: #fff;
    line-height: 14px;
    height: 8px;
    overflow: hidden;
    font-family: "Open Sans", "Noto Sans CJK SC", sans-serif;
}
```
